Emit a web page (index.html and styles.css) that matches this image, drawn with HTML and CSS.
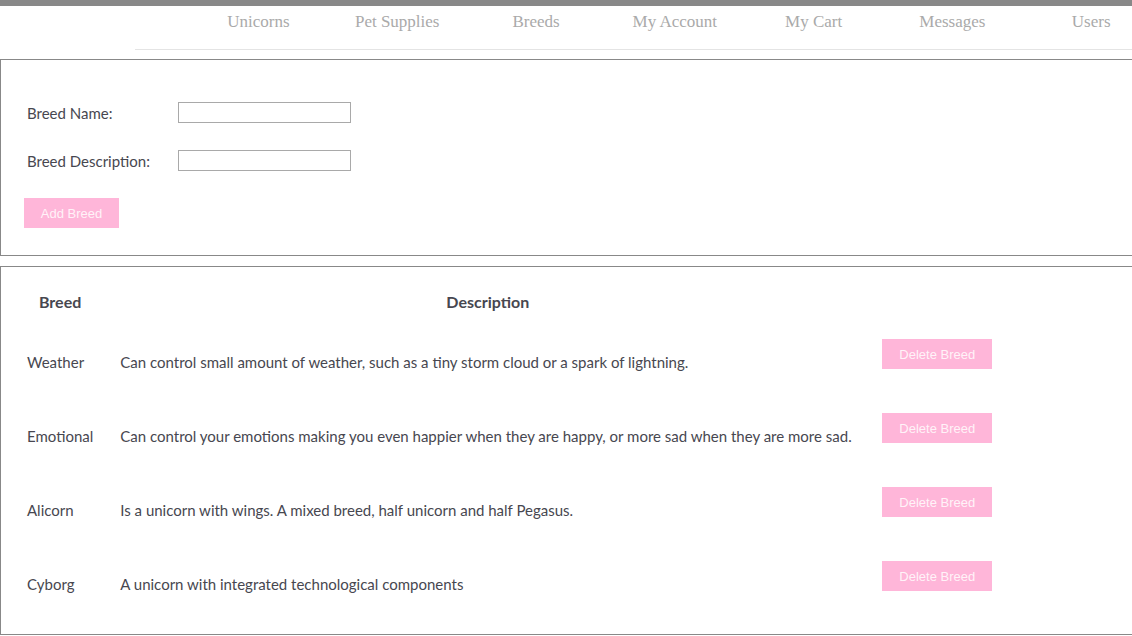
FILE: index.html
```html
<!DOCTYPE html>
<html>
<head>
<meta charset="utf-8">
<title>Breeds</title>
<link rel="stylesheet" href="styles.css">
</head>
<body>
<div class="topbar"></div>
<nav class="nav">
  <ul class="nav-list">
    <li><a href="#">Unicorns</a></li>
    <li><a href="#">Pet Supplies</a></li>
    <li><a href="#">Breeds</a></li>
    <li><a href="#">My Account</a></li>
    <li><a href="#">My Cart</a></li>
    <li><a href="#">Messages</a></li>
    <li><a href="#">Users</a></li>
  </ul>
</nav>

<section class="box add-box">
  <div class="field">
    <label class="label">Breed Name:</label>
    <input class="input" type="text">
  </div>
  <div class="field">
    <label class="label">Breed Description:</label>
    <input class="input" type="text">
  </div>
  <div class="actions">
    <button class="btn btn-add">Add Breed</button>
  </div>
</section>

<section class="box list-box">
  <table class="breeds">
    <thead>
      <tr>
        <th class="c1">Breed</th>
        <th class="c2">Description</th>
        <th class="c3"></th>
      </tr>
    </thead>
    <tbody>
      <tr>
        <td class="c1">Weather</td>
        <td class="c2">Can control small amount of weather, such as a tiny storm cloud or a spark of lightning.</td>
        <td class="c3"><div class="form"><button class="btn btn-del">Delete Breed</button></div></td>
      </tr>
      <tr>
        <td class="c1">Emotional</td>
        <td class="c2">Can control your emotions making you even happier when they are happy, or more sad when they are more sad.</td>
        <td class="c3"><div class="form"><button class="btn btn-del">Delete Breed</button></div></td>
      </tr>
      <tr>
        <td class="c1">Alicorn</td>
        <td class="c2">Is a unicorn with wings. A mixed breed, half unicorn and half Pegasus.</td>
        <td class="c3"><div class="form"><button class="btn btn-del">Delete Breed</button></div></td>
      </tr>
      <tr>
        <td class="c1">Cyborg</td>
        <td class="c2">A unicorn with integrated technological components</td>
        <td class="c3"><div class="form"><button class="btn btn-del">Delete Breed</button></div></td>
      </tr>
    </tbody>
  </table>
</section>
</body>
</html>
```

FILE: styles.css
```css
html, body {
  margin: 0;
  padding: 0;
  background: #fff;
  overflow: hidden;
}
body {
  font-family: "Lato", "Open Sans", sans-serif;
  font-size: 15px;
  color: #474750;
}
.topbar {
  height: 6px;
  background: #888;
}
.nav {
  margin-left: 135px;
  height: 43px;
  border-bottom: 1px solid #e4e4e4;
}
.nav-list {
  list-style: none;
  margin: 0;
  padding: 0 0 0 54px;
  display: flex;
  white-space: nowrap;
}
.nav-list li {
  flex: 0 0 138.8px;
  text-align: center;
  line-height: 30px;
}
.nav-list a {
  font-family: "Liberation Serif", "DejaVu Serif", serif;
  font-size: 17px;
  color: #aaa;
  text-decoration: none;
}
.box {
  border: 1px solid #888;
  border-right: none;
}
.add-box {
  margin-top: 9px;
  padding: 42px 0 27px 0;
  display: flex;
  flex-direction: column;
  gap: 27px;
}
.field {
  display: flex;
  align-items: center;
  height: 21px;
  padding-left: 26px;
}
.label {
  width: 151px;
  flex: 0 0 151px;
}
.input {
  width: 173px;
  height: 21px;
  box-sizing: border-box;
  border: 1px solid #a9a9a9;
  margin: 0;
  padding: 0 2px;
}
.actions {
  padding-left: 23px;
  height: 30px;
}
.btn {
  border: none;
  background: #ffb6d9;
  color: #fff3f8;
  font-family: "Liberation Sans", Arial, sans-serif;
  font-size: 13px;
  height: 30px;
  padding: 0;
  cursor: pointer;
}
.btn-add {
  width: 95px;
}
.btn-del {
  width: 110px;
}
.list-box {
  margin-top: 10px;
  padding: 11px 0 13px 13px;
}
.breeds {
  border-collapse: collapse;
  border-spacing: 0;
}
.breeds th, .breeds td {
  padding: 0 14px 0 13px;
  vertical-align: middle;
  white-space: nowrap;
}
.breeds th {
  font-weight: bold;
  font-size: 16px;
  text-align: center;
  height: 47px;
}
.breeds td {
  height: 74px;
  text-align: left;
}
.c1 { width: 66px; }
.c2 { width: 735px; }
.c3 { width: 110px; }
.form {
  margin-bottom: 16px;
  height: 30px;
}
```
